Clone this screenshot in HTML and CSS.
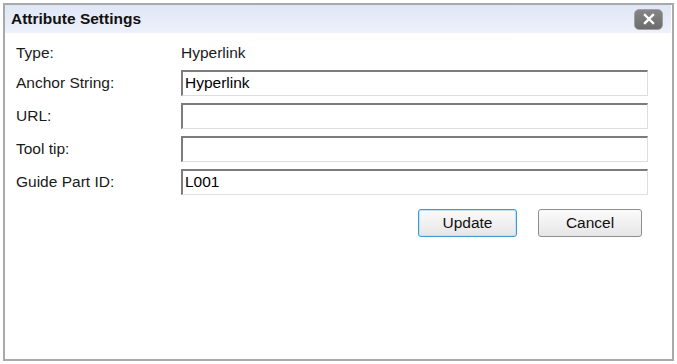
FILE: index.html
```html
<!DOCTYPE html>
<html>
<head>
<meta charset="utf-8">
<link rel="stylesheet" href="styles.css">
</head>
<body>
<div class="dialog">
  <div class="titlebar">
    <span class="title">Attribute Settings</span>
    <button class="close" aria-label="Close">
      <svg width="12" height="12" viewBox="0 0 12 12"><path d="M2 2L10 10M10 2L2 10" stroke="#fff" stroke-width="2.4" stroke-linecap="square"/></svg>
    </button>
  </div>
  <div class="content">
    <div class="form">
      <div class="label type-row">Type:</div>
      <div class="value type-row">Hyperlink</div>
      <div class="label">Anchor String:</div>
      <div class="field">Hyperlink</div>
      <div class="label">URL:</div>
      <div class="field"></div>
      <div class="label">Tool tip:</div>
      <div class="field"></div>
      <div class="label">Guide Part ID:</div>
      <div class="field">L001</div>
    </div>
    <div class="actions">
      <button class="btn btn-primary">Update</button>
      <button class="btn">Cancel</button>
    </div>
  </div>
</div>
</body>
</html>
```
FILE: styles.css
```css
* { box-sizing: border-box; }
html, body { margin: 0; padding: 0; background: #fff; }
body {
  font-family: "Liberation Sans", Arial, sans-serif;
  font-size: 15.5px;
  color: #1a1a1a;
  padding: 3px;
}
.dialog {
  width: 671px;
  height: 358px;
  border: 2px solid #a9a9a9;
  background: #fff;
  display: flex;
  flex-direction: column;
}
.titlebar {
  height: 28px;
  background: linear-gradient(#dfe6f6, #eef1fa);
  display: flex;
  align-items: center;
  justify-content: space-between;
  padding: 0 8px 0 6px;
  margin-right: 1px;
}
.title {
  font-weight: bold;
  font-size: 15.5px;
  color: #111;
}
.close {
  width: 29px;
  height: 21px;
  padding: 0;
  border: 1px solid #a0a0a0;
  border-radius: 5px;
  background: linear-gradient(#858585, #6c6c6c);
  display: flex;
  align-items: center;
  justify-content: center;
}
.content {
  padding: 10px 24px 0 11px;
}
.form {
  display: grid;
  grid-template-columns: 165px 1fr;
  grid-template-rows: 20px 26px 26px 26px 26px;
  row-gap: 7px;
  align-items: center;
}
.label, .value { line-height: 20px; }
.field {
  height: 26px;
  border-top: 2px solid #7c7c7c;
  border-left: 2px solid #7c7c7c;
  border-right: 1px solid #dedede;
  border-bottom: 1px solid #dedede;
  padding: 0 2px;
  line-height: 22px;
  color: #000;
}
.actions {
  display: flex;
  justify-content: flex-end;
  gap: 21px;
  margin-top: 14px;
  padding-right: 6px;
}
.btn {
  height: 28px;
  width: 104px;
  font-family: "Liberation Sans", Arial, sans-serif;
  font-size: 15.5px;
  color: #111;
  border: 1px solid #8e8e8e;
  border-radius: 3px;
  background: linear-gradient(#fbfbfb, #e6e6e6);
  padding: 0;
}
.btn-primary {
  width: 99px;
  border: 1px solid #3c9ad6;
  box-shadow: inset 0 0 0 1px #bfe2f5;
}
```
